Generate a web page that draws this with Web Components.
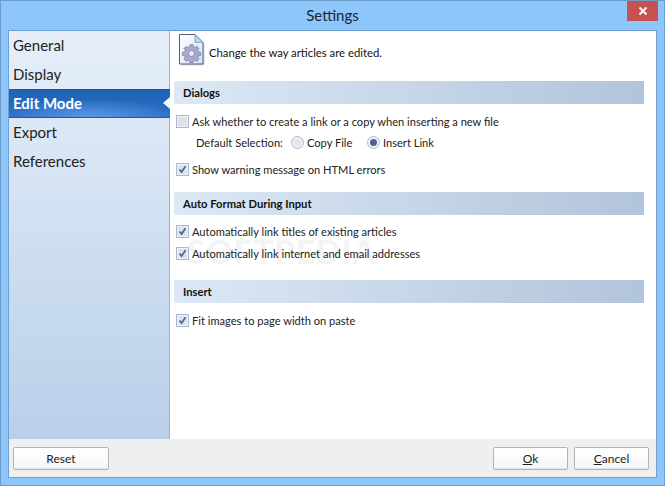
<!DOCTYPE html>
<html>
<head>
<meta charset="utf-8">
<title>Settings</title>
<style>
    html, body { margin: 0; padding: 0; background: #8cc6fb; }
    body { font-family: Lato, "Open Sans", sans-serif; font-size: 12px; }
</style>
</head>
<body>
<settings-window>
    <nav-item slot="nav">General</nav-item>
    <nav-item slot="nav">Display</nav-item>
    <nav-item slot="nav" selected>Edit Mode</nav-item>
    <nav-item slot="nav">Export</nav-item>
    <nav-item slot="nav">References</nav-item>

    <settings-intro>Change the way articles are edited.</settings-intro>

    <section-header style="margin-top:15px">Dialogs</section-header>
    <check-row style="margin-top:9px">Ask whether to create a link or a copy when inserting a new file</check-row>
    <selection-row></selection-row>
    <check-row checked style="margin-top:8px">Show warning message on HTML errors</check-row>

    <section-header style="margin-top:14px">Auto Format During Input</section-header>
    <check-row checked style="margin-top:8px">Automatically link titles of existing articles</check-row>
    <check-row checked style="margin-top:5px">Automatically link internet and email addresses</check-row>

    <section-header style="margin-top:18px">Insert</section-header>
    <check-row checked style="margin-top:9px">Fit images to page width on paste</check-row>

    <dlg-button slot="left" style="width:96px">Reset</dlg-button>
    <dlg-button slot="right"><u>O</u>k</dlg-button>
    <dlg-button slot="right"><u>C</u>ancel</dlg-button>
</settings-window>

<script>
class SettingsWindow extends HTMLElement {
    constructor() {
        super();
        this.attachShadow({ mode: 'open' });
        this.shadowRoot.innerHTML = `
            <style>
                :host {
                    display: flex;
                    flex-direction: column;
                    box-sizing: border-box;
                    width: 665px;
                    height: 486px;
                    background: #8cc6fb;
                    border: 1px solid #6d9cc8;
                    color: #1a1a1a;
                }
                .titlebar {
                    display: flex;
                    justify-content: center;
                    align-items: center;
                    position: relative;
                    height: 29px;
                    padding-bottom: 2px;
                    box-sizing: border-box;
                    font-size: 15px;
                    color: #1c2530;
                }
                .close {
                    position: absolute;
                    top: 0;
                    right: 6px;
                    width: 31px;
                    height: 20px;
                    background: #c75050;
                    display: flex;
                    align-items: center;
                    justify-content: center;
                }
                .client {
                    flex: 1;
                    display: flex;
                    flex-direction: column;
                    margin: 0 7px 7px;
                    border: 1px solid #6f9fce;
                    background: #fff;
                    min-height: 0;
                }
                .main { flex: 1; display: flex; min-height: 0; }
                .nav {
                    width: 160px;
                    border-right: 1px solid #a9b3bf;
                    background: linear-gradient(#e6eff9, #b9cfe9);
                }
                .content {
                    flex: 1;
                    position: relative;
                    padding: 0 12px 0 4px;
                    overflow: hidden;
                }
                .rows { position: relative; }
                .watermark {
                    position: absolute;
                    left: 17px;
                    top: 200px;
                    font-size: 33px;
                    font-weight: 700;
                    letter-spacing: 1px;
                    color: #f4f4f4;
                }
                .footer {
                    height: 38px;
                    box-sizing: border-box;
                    background: #efefef;
                    display: flex;
                    justify-content: space-between;
                    align-items: flex-start;
                    padding: 8px 7px 0 4px;
                }
                .right { display: flex; gap: 6px; }
            </style>
            <div class="titlebar">
                <span>Settings</span>
                <div class="close">
                    <svg width="10" height="10" viewBox="0 0 10 10"><path d="M1.5 1.5 L8.5 8.5 M8.5 1.5 L1.5 8.5" stroke="#fff" stroke-width="2" fill="none"/></svg>
                </div>
            </div>
            <div class="client">
                <div class="main">
                    <div class="nav"><slot name="nav"></slot></div>
                    <div class="content">
                        <div class="watermark">SOFTPEDIA</div>
                        <div class="rows"><slot></slot></div>
                    </div>
                </div>
                <div class="footer">
                    <slot name="left"></slot>
                    <div class="right"><slot name="right"></slot></div>
                </div>
            </div>
        `;
    }
}

class NavItem extends HTMLElement {
    constructor() {
        super();
        this.attachShadow({ mode: 'open' });
        this.shadowRoot.innerHTML = `
            <style>
                :host {
                    display: flex;
                    align-items: center;
                    position: relative;
                    box-sizing: border-box;
                    height: 29px;
                    padding: 0 0 2px 4px;
                    font-size: 15px;
                    color: #222;
                }
                :host([selected]) {
                    margin-right: -1px;
                    color: #fff;
                    font-weight: 700;
                    border-top: 1px solid #1b5aa6;
                    border-bottom: 1px solid #1b5aa6;
                    background:
                        radial-gradient(ellipse 90px 18px at 50% 100%, #5b97e6, transparent),
                        linear-gradient(#1f62b4, #2b70c8);
                }
                .notch {
                    display: none;
                    position: absolute;
                    right: 0;
                    top: 7px;
                    border-style: solid;
                    border-width: 6.5px 7px 6.5px 0;
                    border-color: transparent #f4f7fb transparent transparent;
                }
                :host([selected]) .notch { display: block; }
            </style>
            <slot></slot>
            <div class="notch"></div>
        `;
    }
}

class SettingsIntro extends HTMLElement {
    constructor() {
        super();
        this.attachShadow({ mode: 'open' });
        this.shadowRoot.innerHTML = `
            <style>
                :host {
                    display: flex;
                    align-items: center;
                    gap: 4px;
                    margin: 3px 0 0 4px;
                    height: 32px;
                    font-size: 11.3px;
                    color: #111;
                }
                span { position: relative; top: 2px; }
            </style>
            <svg width="27" height="32" viewBox="0 0 27 32">
                <defs>
                    <linearGradient id="page" x1="0" y1="0" x2="1" y2="1">
                        <stop offset="0" stop-color="#ffffff"/>
                        <stop offset="1" stop-color="#d5e2f3"/>
                    </linearGradient>
                </defs>
                <path d="M2.5 1.5 H17.5 L25.5 9.5 V30.5 H2.5 Z" fill="#8d9299" opacity=".35" transform="translate(1 1)"/>
                <path d="M1.5 .5 H17 L25 8.5 V30 H1.5 Z" fill="url(#page)" stroke="#4e5f7d"/>
                <path d="M17 .5 V8.5 H25 Z" fill="#bcd6f1" stroke="#7c99bf" stroke-width=".8"/>
                <path d="M11.6 9.5 h3.8 l.5 2.6 1.4.6 2.2-1.5 2.6 2.6-1.5 2.2.6 1.4 2.6.5 v3.8 l-2.6.5-.6 1.4 1.5 2.2-2.6 2.6-2.2-1.5-1.4.6-.5 2.2 h-3.8 l-.5-2.2-1.4-.6-2.2 1.5-2.6-2.6 1.5-2.2-.6-1.4-2.6-.5 v-3.8 l2.6-.5.6-1.4-1.5-2.2 2.6-2.6 2.2 1.5 1.4-.6 Z" fill="#a9a8cf" stroke="#77779f" stroke-width=".8" transform="translate(1.6 2.4) scale(.88)"/>
                <circle cx="13.5" cy="19.5" r="3" fill="#e9ebf5" stroke="#77779f" stroke-width=".8"/>
            </svg>
            <span><slot></slot></span>
        `;
    }
}

class SectionHeader extends HTMLElement {
    constructor() {
        super();
        this.attachShadow({ mode: 'open' });
        this.shadowRoot.innerHTML = `
            <style>
                :host {
                    display: flex;
                    align-items: center;
                    height: 23px;
                    padding-left: 9px;
                    font-size: 11.2px;
                    font-weight: 700;
                    color: #111;
                    background: linear-gradient(90deg, #dce8f5, #b2c4db);
                }
            </style>
            <slot></slot>
        `;
    }
}

class CheckRow extends HTMLElement {
    constructor() {
        super();
        this.attachShadow({ mode: 'open' });
        this.shadowRoot.innerHTML = `
            <style>
                :host {
                    display: flex;
                    align-items: center;
                    gap: 3px;
                    height: 17px;
                    padding-left: 2px;
                    font-size: 11.1px;
                    color: #222;
                }
                .box {
                    box-sizing: border-box;
                    width: 13px;
                    height: 13px;
                    border: 1px solid #a6b8d2;
                    background: #dfe2e8;
                    box-shadow: inset 0 0 0 1px #f1f2f5;
                }
                svg { display: none; }
                :host([checked]) svg { display: block; }
            </style>
            <div class="box">
                <svg width="11" height="11" viewBox="0 0 11 11"><path d="M2.5 5.5 L4.6 8 L8.5 2.2" fill="none" stroke="#4a6796" stroke-width="1.7"/></svg>
            </div>
            <slot></slot>
        `;
    }
}

class RadioOption extends HTMLElement {
    constructor() {
        super();
        this.attachShadow({ mode: 'open' });
        this.shadowRoot.innerHTML = `
            <style>
                :host {
                    display: inline-flex;
                    align-items: center;
                    gap: 3px;
                    color: #222;
                    white-space: nowrap;
                }
                .ring {
                    box-sizing: border-box;
                    width: 13px;
                    height: 13px;
                    border-radius: 50%;
                    border: 1px solid #a9bbd6;
                    background: #eef0f4;
                    display: flex;
                    align-items: center;
                    justify-content: center;
                }
                .dot {
                    width: 7px;
                    height: 7px;
                    border-radius: 50%;
                    background: #e2e5ea;
                }
                :host([checked]) .dot { background: #47648f; }
            </style>
            <div class="ring"><div class="dot"></div></div>
            <slot></slot>
        `;
    }
}

class SelectionRow extends HTMLElement {
    constructor() {
        super();
        this.attachShadow({ mode: 'open' });
        this.shadowRoot.innerHTML = `
            <style>
                :host {
                    display: flex;
                    align-items: center;
                    height: 21px;
                    margin-top: 2px;
                    padding-left: 22px;
                    font-size: 11.1px;
                    color: #222;
                }
                .label { width: 95px; white-space: nowrap; }
                .first { width: 76px; }
            </style>
            <span class="label">Default Selection:</span>
            <radio-option class="first">Copy File</radio-option>
            <radio-option checked>Insert Link</radio-option>
        `;
    }
}

class DlgButton extends HTMLElement {
    constructor() {
        super();
        this.attachShadow({ mode: 'open' });
        this.shadowRoot.innerHTML = `
            <style>
                :host {
                    display: flex;
                    align-items: center;
                    justify-content: center;
                    box-sizing: border-box;
                    width: 75px;
                    height: 23px;
                    border: 1px solid #b4b4b4;
                    border-radius: 2px;
                    background: linear-gradient(#ffffff, #f5f6f8);
                    box-shadow: inset 0 -1px 0 #e3e3e3;
                    color: #222;
                }
            </style>
            <slot></slot>
        `;
    }
}

customElements.define('settings-window', SettingsWindow);
customElements.define('nav-item', NavItem);
customElements.define('settings-intro', SettingsIntro);
customElements.define('section-header', SectionHeader);
customElements.define('check-row', CheckRow);
customElements.define('radio-option', RadioOption);
customElements.define('selection-row', SelectionRow);
customElements.define('dlg-button', DlgButton);
</script>
</body>
</html>
